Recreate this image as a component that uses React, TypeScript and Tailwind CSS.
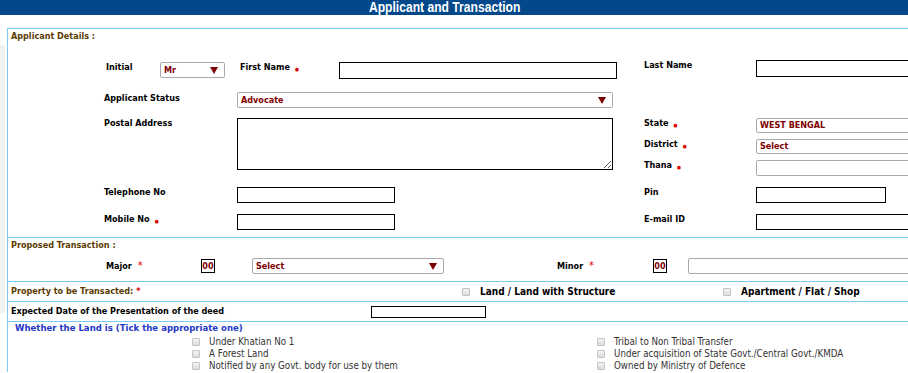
import React from "react";

const font = "font-['DejaVu_Sans_Condensed','DejaVu_Sans',sans-serif]";

function Req() {
  return <span className="ml-[5px] text-[5px] text-[#e00000] align-[-1px]">●</span>;
}

function Arrow() {
  return (
    <svg width="8" height="7" viewBox="0 0 8 7" className="shrink-0">
      <polygon points="0,0 8,0 4,7" fill="#7a0000" />
    </svg>
  );
}

function Select({ value, w, h = 16, arrow = true }: { value: string; w: number; h?: number; arrow?: boolean }) {
  return (
    <div
      className="flex items-center justify-between border border-[#a9a9a9] rounded-[2px] bg-white pl-[3px] pr-[6px] shrink-0"
      style={{ width: w, height: h }}
    >
      <span className="text-[#800000] font-bold text-[9px] leading-none">{value}</span>
      {arrow && <Arrow />}
    </div>
  );
}

function Box({ w, h = 17, gray = false }: { w: number; h?: number; gray?: boolean }) {
  return (
    <div
      className={gray ? "border border-[#a9a9a9] rounded-[2px] bg-white shrink-0" : "border border-black bg-white shrink-0"}
      style={{ width: w, height: h }}
    />
  );
}

function Label({ children, w, className = "" }: { children: React.ReactNode; w: number; className?: string }) {
  return (
    <div className={`shrink-0 font-bold text-[9px] leading-[11px] text-black ${className}`} style={{ width: w }}>
      {children}
    </div>
  );
}

function Check() {
  return (
    <span className="inline-block w-[8px] h-[8px] border border-[#c4c4c4] rounded-[1px] bg-gradient-to-b from-[#f4f4f4] to-[#dcdcdc] shrink-0" />
  );
}

function Code() {
  return (
    <div className="w-[14px] h-[14px] border border-black flex items-center justify-center shrink-0">
      <span className="text-[#800000] font-bold text-[9px] leading-none">00</span>
    </div>
  );
}

export default function App() {
  return (
    <div className={`w-[908px] h-[373px] overflow-hidden bg-white ${font}`}>
      <div className="h-[15px] bg-[#02488b] flex justify-center items-start overflow-hidden pr-[18px]">
        <span className="block scale-x-[0.835] text-white font-bold text-[14.5px] leading-[15px] font-['Liberation_Sans',sans-serif]">
          Applicant and Transaction
        </span>
      </div>

      <div className="flex">
        <div className="w-[5px] h-[268px] mt-[30px] bg-[#f1f1f1] shrink-0" />
        <div className="ml-[2px] mt-[13px] w-[1200px] shrink-0 border-l border-t border-[#7ccbf4]">
          {/* Applicant Details */}
          <div className="h-[209px] border-b border-[#7ccbf4] pl-[3px]">
            <div className="pt-[2px] font-bold text-[9px] leading-[11px] text-[#5a3b00]">Applicant Details :</div>

            <div className="mt-[18px] flex items-start pl-[95px]">
              <Label w={54} className="mt-[2px]">Initial</Label>
              <div className="mt-[2px]">
                <Select value="Mr" w={65} />
              </div>
              <Label w={99} className="mt-[2px] ml-[15px]">
                First Name<Req />
              </Label>
              <div className="mt-[2px]">
                <Box w={278} />
              </div>
              <Label w={112} className="ml-[27px]">Last Name</Label>
              <Box w={200} />
            </div>

            <div className="mt-[13px] flex items-start pl-[93px]">
              <Label w={133} className="mt-[1px]">Applicant Status</Label>
              <Select value="Advocate" w={376} />
            </div>

            <div className="mt-[10px] flex items-start pl-[93px]">
              <Label w={133}>Postal Address</Label>
              <textarea
                readOnly
                className="w-[376px] h-[52px] border border-black resize shrink-0 outline-none"
              />
              <div className="ml-[31px] flex flex-col">
                <div className="flex items-start">
                  <Label w={112}>State<Req /></Label>
                  <Select value="WEST BENGAL" w={200} h={15} arrow={false} />
                </div>
                <div className="mt-[6px] flex items-start">
                  <Label w={112}>District<Req /></Label>
                  <Select value="Select" w={200} h={15} arrow={false} />
                </div>
                <div className="mt-[6px] flex items-start">
                  <Label w={112}>Thana<Req /></Label>
                  <Box w={200} h={16} gray />
                </div>
              </div>
            </div>

            <div className="mt-[11px] flex items-start pl-[93px]">
              <Label w={133}>Telephone No</Label>
              <Box w={158} h={16} />
              <Label w={112} className="ml-[249px]">Pin</Label>
              <Box w={130} h={16} />
            </div>

            <div className="mt-[11px] flex items-start pl-[93px]">
              <Label w={133}>
                Mobile No<Req />
              </Label>
              <Box w={158} h={16} />
              <Label w={112} className="ml-[249px]">E-mail ID</Label>
              <Box w={200} h={16} />
            </div>
          </div>

          {/* Proposed Transaction */}
          <div className="h-[44px] border-b border-[#7ccbf4] pl-[3px]">
            <div className="pt-[2px] font-bold text-[9px] leading-[11px] text-[#5a3b00]">Proposed Transaction :</div>
            <div className="mt-[7px] flex items-center pl-[95px] h-[16px]">
              <Label w={95} className="text-[#10102a]">
                Major <span className="ml-[3px] text-[#e00000] text-[11px] font-normal">*</span>
              </Label>
              <Code />
              <div className="ml-[37px]">
                <Select value="Select" w={192} />
              </div>
              <Label w={96} className="ml-[113px] text-[#10102a]">
                Minor <span className="ml-[3px] text-[#e00000] text-[11px] font-normal">*</span>
              </Label>
              <Code />
              <div className="ml-[21px]">
                <Box w={300} h={16} gray />
              </div>
            </div>
          </div>

          {/* Property */}
          <div className="h-[20px] border-b border-[#7ccbf4] pl-[3px] flex items-center">
            <div className="w-[451px] shrink-0 font-bold text-[9px] leading-[11px] text-[#5a3b00]">
              Property to be Transacted: <span className="text-[#e00000]">*</span>
            </div>
            <Check />
            <span className="ml-[10px] w-[243px] shrink-0 font-bold text-[10px] text-black">Land / Land with Structure</span>
            <Check />
            <span className="ml-[10px] font-bold text-[10px] text-black">Apartment / Flat / Shop</span>
          </div>

          {/* Expected Date */}
          <div className="h-[20px] border-b border-[#7ccbf4] pl-[3px] flex items-center">
            <div className="w-[360px] shrink-0 font-bold text-[9px] leading-[11px] text-black">
              Expected Date of the Presentation of the deed
            </div>
            <Box w={115} h={12} />
          </div>

          {/* Land type */}
          <div className="pl-[7px]">
            <div className="font-bold text-[9.5px] leading-[11px] text-[#2436c8]">
              Whether the Land is (Tick the appropriate one)
            </div>
            <div className="mt-[3px] flex text-[9.7px] leading-[12px] text-[#333]">
              <div className="ml-[177px] w-[405px] shrink-0 flex flex-col">
                {["Under Khatian No 1", "A Forest Land", "Notified by any Govt. body for use by them"].map((t) => (
                  <div key={t} className="flex items-center h-[12px]">
                    <Check />
                    <span className="ml-[9px]">{t}</span>
                  </div>
                ))}
              </div>
              <div className="flex flex-col">
                {[
                  "Tribal to Non Tribal Transfer",
                  "Under acquisition of State Govt./Central Govt./KMDA",
                  "Owned by Ministry of Defence",
                ].map((t) => (
                  <div key={t} className="flex items-center h-[12px]">
                    <Check />
                    <span className="ml-[9px]">{t}</span>
                  </div>
                ))}
              </div>
            </div>
          </div>
        </div>
      </div>
    </div>
  );
}
